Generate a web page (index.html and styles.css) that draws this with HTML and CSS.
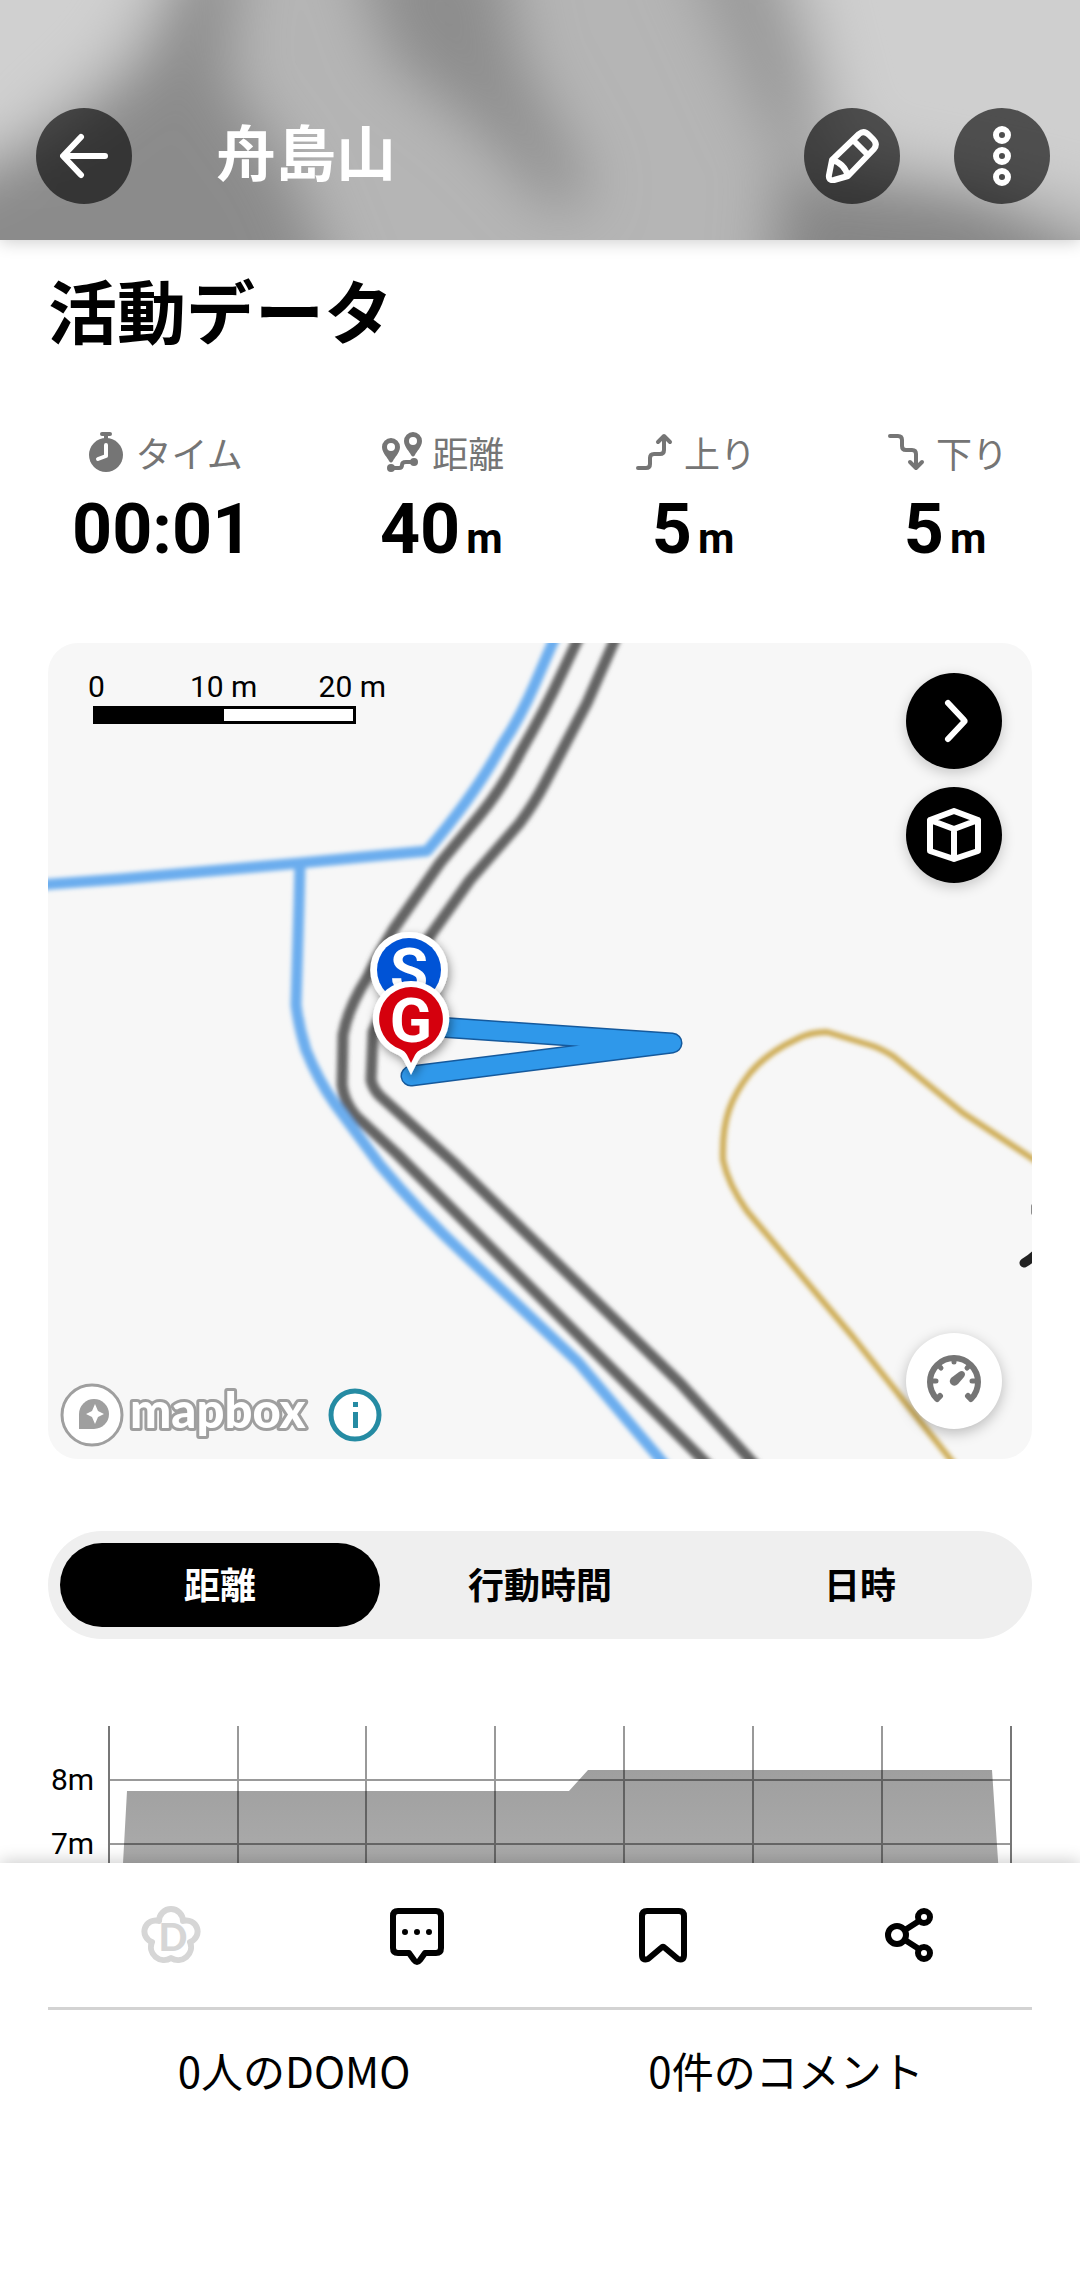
FILE: index.html
```html
<!DOCTYPE html>
<html lang="ja">
<head>
  <meta charset="UTF-8">
  <meta name="viewport" content="width=device-width, initial-scale=1">
  <title>舟島山</title>
  <link rel="stylesheet" href="styles.css">
</head>
<body>
  <header class="header">
    <svg class="header-photo" viewBox="0 0 1080 240" preserveAspectRatio="xMidYMid slice" aria-hidden="true">
      <defs>
        <filter id="soft" x="-30%" y="-60%" width="160%" height="220%"><feGaussianBlur stdDeviation="30"/></filter>
      </defs>
      <rect width="1080" height="240" fill="#b5b5b5"/>
      <g filter="url(#soft)">
        <path d="M-80-80H200L110 60 0 160-80 220z" fill="#d0d0d0"/>
        <path d="M190-60H240L225 80 290 170 350 320H-80V190L60 130 150 60z" fill="#8b8b8b"/>
        <path d="M350-60H500L520 60 590 190 560 215 480 130 390 60z" fill="#8d8d8d"/>
        <path d="M680-60H760L810 70 810 170 770 140z" fill="#989898"/>
        <path d="M790-80H1180V230L1040 190 850 150z" fill="#cfcfcf"/>
        <path d="M780 170 980 195 1100 260V320H770z" fill="#868686"/>
      </g>
    </svg>
    <button class="round round-dark" type="button" aria-label="戻る">
      <svg width="48" height="48" viewBox="0 0 48 48"><path d="M45 24H4M21 5 3 24l18 19"/></svg>
    </button>
    <h1 class="header-title">舟島山</h1>
    <button class="round round-dark" type="button" aria-label="編集">
      <svg width="54" height="54" viewBox="0 0 54 54"><path d="M7 31 34 5q5-4 10 1l4 4q5 5 1 10L23 47 9 51q-6 1-5-5zM7 31q12 3 16 16M28 11l15 15"/></svg>
    </button>
    <button class="round round-dark" type="button" aria-label="メニュー">
      <svg width="60" height="60" viewBox="0 0 60 60"><circle cx="30" cy="9" r="6"/><circle cx="30" cy="30" r="6"/><circle cx="30" cy="51" r="6"/></svg>
    </button>
  </header>

  <main class="content">
    <h2 class="section-title">活動データ</h2>

    <dl class="stats">
      <div class="stat">
        <dt>
          <svg width="48" height="48" viewBox="0 0 48 48">
            <circle class="fill" cx="24" cy="27" r="17"/>
            <path d="M20 6h8M24 6v7"/>
            <path class="hand" d="M24 17v11l-8 3"/>
          </svg>
          タイム
        </dt>
        <dd>00:01</dd>
      </div>
      <div class="stat">
        <dt>
          <svg width="48" height="48" viewBox="0 0 48 48">
            <path class="fill" fill-rule="evenodd" d="M13 10a9 9 0 0 1 9 9c0 6-6 11-7 14q-2 3-4 0C10 30 4 25 4 19a9 9 0 0 1 9-9zm0 5a4 4 0 1 0 0 8 4 4 0 0 0 0-8zM35 4a9 9 0 0 1 9 9c0 6-6 11-7 14q-2 3-4 0c-1-3-7-8-7-14a9 9 0 0 1 9-9zm0 5a4 4 0 1 0 0 8 4 4 0 0 0 0-8z"/>
            <circle class="fill" cx="13" cy="40" r="4"/>
            <circle class="fill" cx="36" cy="34" r="4"/>
            <path d="M13 40h8q3 0 3-3t4-3h8"/>
          </svg>
          距離
        </dt>
        <dd>40<span class="unit">m</span></dd>
      </div>
      <div class="stat">
        <dt>
          <svg width="48" height="48" viewBox="0 0 48 48"><path d="M8 40h8q4 0 4-4v-6q0-4 4-4h6q4 0 4-4V9M28 14l6-6 6 6"/></svg>
          上り
        </dt>
        <dd>5<span class="unit">m</span></dd>
      </div>
      <div class="stat">
        <dt>
          <svg width="48" height="48" viewBox="0 0 48 48"><path d="M8 8h8q4 0 4 4v6q0 4 4 4h6q4 0 4 4v13M28 34l6 6 6-6"/></svg>
          下り
        </dt>
        <dd>5<span class="unit">m</span></dd>
      </div>
    </dl>

    <section class="map" aria-label="地図">
      <svg class="map-canvas" viewBox="48 643 984 816" preserveAspectRatio="xMidYMid slice">
        <defs>
          <filter id="tile" x="-5%" y="-5%" width="110%" height="110%"><feGaussianBlur stdDeviation="2"/></filter>
          <filter id="pinShadow" x="-40%" y="-40%" width="180%" height="180%"><feDropShadow dx="2" dy="4" stdDeviation="5" flood-opacity=".4"/></filter>
        </defs>
        <g class="roads" filter="url(#tile)">
          <path class="contour" d="M1045 1167 963 1113 893 1056Q880 1048 870 1045L827 1032Q810 1032 797 1039 768 1052 750 1073 735 1092 729 1110 722 1130 723 1160 728 1184 747 1211L853 1337 955 1465"/>
          <path class="road" d="M580 635 562 673Q545 710 520 753 503 787 480 815L440 863 393 930Q378 955 367 978 348 1008 343 1035L342 1085Q344 1102 356 1116L397 1154 708 1465"/>
          <path class="road" d="M617 635 587 703 545 783Q534 804 519 824L470 880 430 936Q385 1005 373 1032L371 1080Q373 1089 380 1096L453 1162 680 1383 755 1465"/>
          <path class="water" d="M40 885 120 879 300 863 427 851Q475 795 502 745 520 718 534 686L556 635"/>
          <path class="water" d="M300 865 299 905 296 1005Q299 1028 306 1050 318 1080 335 1104L380 1165Q420 1213 465 1255L578 1362 665 1465"/>
        </g>
        <path class="map-mark" d="M1024 1263q7-4 12-9M1036 1206v7"/>
        <g class="track">
          <path class="track-edge" d="M409 1025 672 1043 411 1076"/>
          <path class="track-line" d="M409 1025 672 1043 411 1076"/>
        </g>
        <g filter="url(#pinShadow)">
          <path fill="#fff" d="M409 932a38 38 0 0 1 13 74l-13 18-13-18a38 38 0 0 1 13-74z"/>
          <circle cx="409" cy="970" r="32" fill="#0353d6"/>
          <text class="pin-text" x="409" y="992">S</text>
        </g>
        <g filter="url(#pinShadow)">
          <path fill="#fff" d="M411 981a38 38 0 0 1 15 73q-6 2-9 9l-6 12-6-12q-3-7-9-9a38 38 0 0 1 15-73z"/>
          <path fill="#d5000f" d="M411 987a32 32 0 0 1 11 62q-5 2-7 6l-4 8-4-8q-2-4-7-6a32 32 0 0 1 11-62z"/>
          <text class="pin-text" x="411" y="1042">G</text>
        </g>
      </svg>

      <div class="scale">
        <div class="scale-labels"><span>0</span><span>10 m</span><span>20 m</span></div>
        <div class="scale-bar"></div>
      </div>

      <div class="map-tools">
        <button class="round round-black" type="button" aria-label="次へ">
          <svg width="48" height="48" viewBox="0 0 48 48"><path d="m18 6 16 17q1 1 0 2L18 42"/></svg>
        </button>
        <button class="round round-black" type="button" aria-label="3D表示">
          <svg width="54" height="54" viewBox="0 0 54 54"><path d="m27 3 24 9v31l-24 8-24-8V12zM3 12l24 9 24-9M27 21v30"/></svg>
        </button>
      </div>
      <button class="round round-white map-speed" type="button" aria-label="速度">
        <svg width="54" height="54" viewBox="0 0 54 54">
          <path d="M10 45A24 24 0 1 1 44 45M10 45l3-3M44 45l-3-3"/>
          <path class="tick" d="M5 27h4M49 27h-4M27 4v4M13 13l1 1M41 13l-1 1"/>
          <path class="fill" d="m24 24 8-6q3-2 5 0t0 5l-6 7q-3 3-6 1-4-3-1-7z"/>
        </svg>
      </button>

      <div class="map-credit">
        <svg width="264" height="64" viewBox="0 0 264 64" role="img" aria-label="mapbox">
          <circle cx="32" cy="32" r="30" fill="#fff" stroke="#9f9f9f" stroke-width="3"/>
          <path d="M19 46V31a15 15 0 1 1 15 15z" fill="#9f9f9f"/>
          <path d="m35 21 3 7 6 3-6 3-3 7-3-7-6-3 6-3z" fill="#fff"/>
          <text class="mapbox-text" x="70" y="45">mapbox</text>
        </svg>
        <button class="info" type="button" aria-label="情報">
          <svg width="54" height="54" viewBox="0 0 54 54">
            <circle cx="27" cy="27" r="24" fill="#fff" stroke="#258ba3" stroke-width="5"/>
            <path d="M25 14h5v5h-5zM25 24h5v16h-5z" fill="#258ba3"/>
          </svg>
        </button>
      </div>
    </section>

    <div class="tabs" role="tablist">
      <button class="tab active" type="button" role="tab" aria-selected="true">距離</button>
      <button class="tab" type="button" role="tab" aria-selected="false">行動時間</button>
      <button class="tab" type="button" role="tab" aria-selected="false">日時</button>
    </div>

    <svg class="chart" viewBox="0 0 984 300" role="img" aria-label="標高グラフ">
      <defs>
        <linearGradient id="area" x1="0" y1="0" x2="0" y2="1">
          <stop offset="0" stop-color="#9f9f9f"/>
          <stop offset="1" stop-color="#c0c0c0"/>
        </linearGradient>
      </defs>
      <path fill="url(#area)" d="M66 300 79 65H521L540 44H944L961 300z"/>
      <path class="grid" d="M190 0V300M318 0V300M447 0V300M576 0V300M705 0V300M834 0V300M61 54H962M61 118H962M61 182H962M61 246H962"/>
      <path class="axis" d="M61 0V300M963 0V300"/>
      <text x="3" y="64">8m</text>
      <text x="3" y="128">7m</text>
    </svg>
  </main>

  <footer class="footer">
    <div class="actions">
      <button class="action domo" type="button" aria-label="DOMO" disabled>
        <svg width="60" height="60" viewBox="0 0 60 60">
          <path d="M18 16A12 12 0 0 1 42 16 11 11 0 0 1 49 37 13 13 0 0 1 30 53 13 13 0 0 1 11 37 11 11 0 0 1 18 16z"/>
          <text x="32" y="46">D</text>
        </svg>
      </button>
      <button class="action" type="button" aria-label="コメント">
        <svg width="60" height="60" viewBox="0 0 60 60">
          <path d="M11 6H49Q54 6 54 11V43Q54 48 49 48H38L33 55Q30 59 27 55L22 48H11Q6 48 6 43V11Q6 6 11 6z"/>
          <path class="fill" d="M18 24a3 3 0 1 1 0 6 3 3 0 0 1 0-6zM30 24a3 3 0 1 1 0 6 3 3 0 0 1 0-6zM42 24a3 3 0 1 1 0 6 3 3 0 0 1 0-6z"/>
        </svg>
      </button>
      <button class="action" type="button" aria-label="保存">
        <svg width="60" height="60" viewBox="0 0 60 60"><path d="M14 6H46Q51 6 51 11V50Q51 56 45 54L32 43Q30 41 28 43L15 54Q9 56 9 50V11Q9 6 14 6z"/></svg>
      </button>
      <button class="action" type="button" aria-label="共有">
        <svg width="60" height="60" viewBox="0 0 60 60"><circle cx="18" cy="30" r="9"/><circle cx="45" cy="12" r="6"/><circle cx="45" cy="48" r="6"/><path d="m26 25 14-9M26 35l14 9"/></svg>
      </button>
    </div>
    <div class="counts">
      <a href="#domo">0人のDOMO</a>
      <a href="#comments">0件のコメント</a>
    </div>
  </footer>
</body>
</html>
```
FILE: styles.css
```css
* { box-sizing: border-box; }
body {
  margin: 0;
  height: 100vh;
  display: flex;
  flex-direction: column;
  background: #fff;
  color: #000;
  font-family: Roboto, "Noto Sans CJK JP", sans-serif;
}
h1, h2, dl, dd { margin: 0; }
button { border: none; padding: 0; font: inherit; cursor: pointer; }
svg { display: block; fill: none; stroke-linecap: round; stroke-linejoin: round; }

/* header */
.header {
  position: relative;
  z-index: 1;
  display: flex;
  align-items: center;
  gap: 54px;
  padding: 108px 30px 36px 36px;
  box-shadow: 0 2px 16px rgba(0,0,0,0.2);
}
.header-photo { position: absolute; inset: 0; z-index: -1; width: 100%; height: 100%; }
.header-title { flex: 1; padding: 0 0 12px 30px; color: #fff; font-size: 60px; line-height: 84px; font-family: "Noto Sans CJK JP", sans-serif; }

.round {
  flex: none;
  display: flex;
  align-items: center;
  justify-content: center;
  width: 96px;
  height: 96px;
  border-radius: 50%;
}
.round svg { stroke: #fff; stroke-width: 6; }
.round-dark { background: rgba(0,0,0,0.62); }
.round-black { background: #000; box-shadow: 0 4px 14px rgba(0,0,0,0.2); }
.round-white { background: #fff; box-shadow: 0 4px 14px rgba(0,0,0,0.25); }
.round-white svg { stroke: #757575; }
.round-white .tick { stroke-width: 5; }
.round-white .fill { fill: #757575; stroke: none; }

/* content */
.content { flex: 1; min-height: 0; overflow: hidden; padding: 29px 48px 0; }
.section-title { font-size: 69px; line-height: 80px; font-family: "Noto Sans CJK JP", sans-serif; }

.stats { display: flex; justify-content: space-between; margin: 79px 0 72px; padding: 0 24px; }
.stat { display: flex; flex-direction: column; align-items: center; gap: 11px; }
.stat dt { display: flex; align-items: center; gap: 6px; color: #757575; font-size: 36px; line-height: 48px; font-family: "Noto Sans CJK JP", sans-serif; }
.stat dt svg { stroke: #757575; stroke-width: 4; }
.stat dt .fill { fill: #757575; stroke: none; }
.stat dt .hand { stroke: #fff; }
.stat dd { font-size: 70px; font-weight: bold; line-height: 84px; }
.unit { margin-left: 6px; font-size: 42px; line-height: 1; }

/* map */
.map { position: relative; height: 816px; border-radius: 30px; overflow: hidden; background: #f7f7f7; }
.map-canvas { width: 100%; height: 100%; }
.road { stroke: #646464; stroke-width: 11; }
.water { stroke: #6cadee; stroke-width: 11; }
.contour { stroke: #cdab52; stroke-width: 6; }
.map-mark { stroke: #222; stroke-width: 9; }
.track-edge { stroke: #15599c; stroke-width: 21; }
.track-line { stroke: #2f98ea; stroke-width: 18; }
.pin-text { fill: #fff; font-size: 62px; font-weight: bold; text-anchor: middle; }

.scale { position: absolute; top: 24px; left: 40px; width: 298px; }
.scale-labels { display: flex; justify-content: space-between; font-size: 30px; line-height: 39px; }
.scale-labels span:first-child { margin-right: 24px; }
.scale-bar {
  width: 263px;
  height: 18px;
  margin-left: 5px;
  border: 3px solid #000;
  background: linear-gradient(90deg, #000 50%, #fff 50%);
}
.map-tools { position: absolute; top: 30px; right: 30px; display: flex; flex-direction: column; gap: 18px; }
.map-speed { position: absolute; right: 30px; bottom: 30px; }
.map-credit { position: absolute; left: 12px; bottom: 12px; display: flex; align-items: center; gap: 4px; }
.mapbox-text { font-family: Lato, sans-serif; font-size: 49px; font-weight: 900; fill: #fff; stroke: #9f9f9f; stroke-width: 6; paint-order: stroke; }
.info { background: none; }

/* tabs */
.tabs { display: flex; margin-top: 72px; padding: 12px; border-radius: 54px; background: #efefef; }
.tab { flex: 1; height: 84px; padding-bottom: 4px; border-radius: 42px; background: none; color: #000; font-size: 36px; font-weight: bold; font-family: "Noto Sans CJK JP", sans-serif; }
.tab.active { background: #000; color: #fff; }

/* chart */
.chart { width: 100%; margin-top: 87px; }
.chart .grid { stroke: rgba(0,0,0,0.4); stroke-width: 2; }
.chart .axis { stroke: #777; stroke-width: 2; }
.chart text { fill: #000; font-size: 30px; }

/* footer */
.footer { position: relative; padding: 24px 48px 178px; background: #fff; box-shadow: 0 -2px 16px rgba(0,0,0,0.2); }
.actions { display: flex; border-bottom: 3px solid #d3d3d3; padding-bottom: 24px; }
.action { flex: 1; display: flex; align-items: center; justify-content: center; height: 96px; background: none; }
.action svg { stroke: #000; stroke-width: 6; }
.action .fill { fill: #000; stroke: none; }
.domo svg { stroke: #d6d6d6; }
.domo text { fill: #d6d6d6; stroke: none; font-family: Lato, sans-serif; font-size: 38px; font-weight: 900; text-anchor: middle; }
.counts { display: flex; padding-top: 28px; }
.counts a { flex: 1; color: #000; font-size: 42px; line-height: 64px; text-align: center; text-decoration: none; font-family: "Noto Sans CJK JP", sans-serif; }
```
